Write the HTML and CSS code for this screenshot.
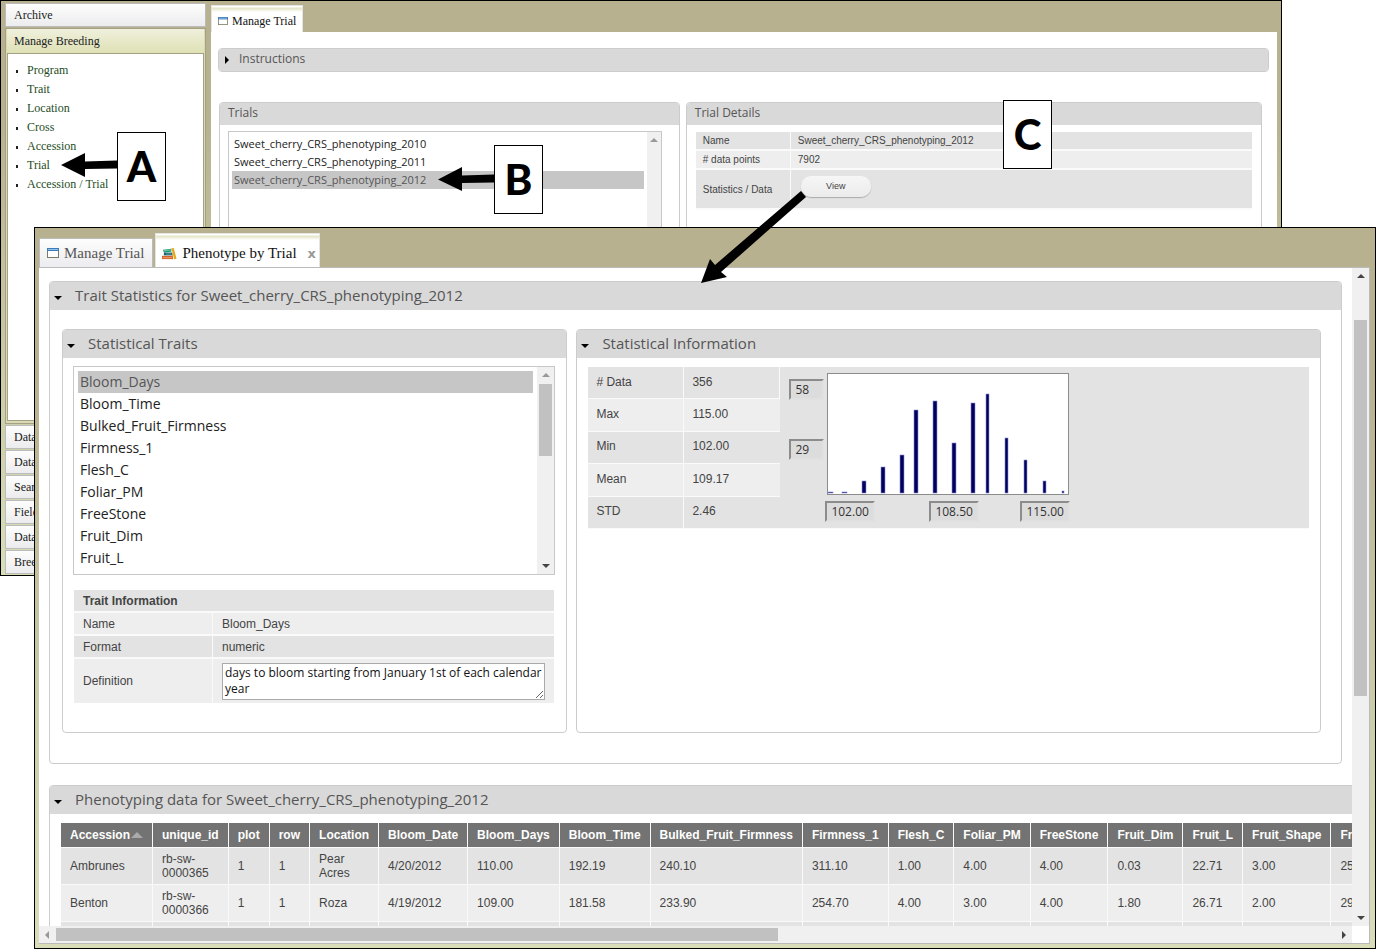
FILE: index.html
```html
<!DOCTYPE html>
<html lang="en">
<head>
  <meta charset="UTF-8">
  <meta name="viewport" content="width=device-width, initial-scale=1.0">
  <title>Phenotype by Trial</title>
  <link rel="stylesheet" href="styles.css">
</head>
<body>
  <!-- Manage Trial window -->
  <div class="window window-back">
    <nav class="sidebar">
      <button class="section" type="button">Archive</button>
      <div class="section-open">
        <button class="section-title" type="button">Manage Breeding</button>
        <ul class="menu">
          <li><a href="#program">Program</a></li>
          <li><a href="#trait">Trait</a></li>
          <li><a href="#location">Location</a></li>
          <li><a href="#cross">Cross</a></li>
          <li><a href="#accession">Accession</a></li>
          <li><a href="#trial">Trial</a></li>
          <li><a href="#accession-trial">Accession / Trial</a></li>
        </ul>
      </div>
      <button class="section" type="button">Data</button>
      <button class="section" type="button">Data</button>
      <button class="section" type="button">Search</button>
      <button class="section" type="button">Field</button>
      <button class="section" type="button">Data</button>
      <button class="section" type="button">Breeding</button>
    </nav>

    <main class="work">
      <div class="tabs tabs-small">
        <button class="tab active" type="button">
          <svg class="icon-window" viewBox="0 0 12 10">
            <rect x="0.5" y="0.5" width="11" height="9" fill="#fff" stroke="#7b7c60"></rect>
            <rect x="0" y="0" width="12" height="3" fill="#3d7cb8"></rect>
            <rect x="1" y="1" width="10" height="1" fill="#8fc1ea"></rect>
          </svg>
          Manage Trial
        </button>
      </div>
      <div class="work-body">
        <section class="panel panel-small">
          <h2 class="panel-head"><span class="caret right"></span>Instructions</h2>
        </section>
        <div class="trial-columns">
          <section class="panel panel-small trials">
            <h2 class="panel-head"><label for="trials">Trials</label></h2>
            <div class="listbox">
              <select id="trials" size="6">
                <option>Sweet_cherry_CRS_phenotyping_2010</option>
                <option>Sweet_cherry_CRS_phenotyping_2011</option>
                <option selected>Sweet_cherry_CRS_phenotyping_2012</option>
              </select>
              <div class="scroll-y"><span class="arrow up off"></span></div>
            </div>
          </section>
          <section class="panel panel-small details">
            <h2 class="panel-head">Trial Details</h2>
            <table class="info info-small">
              <tr><th>Name</th><td>Sweet_cherry_CRS_phenotyping_2012</td></tr>
              <tr><th># data points</th><td>7902</td></tr>
              <tr class="tall"><th>Statistics / Data</th><td><button class="view" type="button">View</button></td></tr>
            </table>
          </section>
        </div>
      </div>
    </main>
  </div>

  <!-- Phenotype by Trial window -->
  <div class="window window-front">
    <div class="tabs">
      <button class="tab" type="button">
        <svg class="icon-window" viewBox="0 0 12 10">
          <rect x="0.5" y="0.5" width="11" height="9" fill="#fff" stroke="#7b7c60"></rect>
          <rect x="0" y="0" width="12" height="3" fill="#3d7cb8"></rect>
          <rect x="1" y="1" width="10" height="1" fill="#8fc1ea"></rect>
        </svg>
        Manage Trial
      </button>
      <button class="tab active" type="button">
        <svg class="icon-books" viewBox="0 0 16 13">
          <path d="M1 2.5 10 1.5 10 4.5 2 5.5Z" fill="#1f9a78"></path>
          <path d="M2 3.5 10 2.7" stroke="#9fd9b5" stroke-width="0.7"></path>
          <path d="M2 5.5H11V8.5H2Z" fill="#17606e"></path>
          <path d="M4 7H10" stroke="#7fc0c0" stroke-width="0.7"></path>
          <path d="M0 9H11V12.5H0Z" fill="#d9622b"></path>
          <path d="M1 11H11" stroke="#f2b48b" stroke-width="0.8"></path>
          <path d="M10 1 12.5 0.5 15.5 12 13 12.5Z" fill="#e9a71c"></path>
          <path d="M11 6 12 12.5H10.5Z" fill="#c07a12"></path>
        </svg>
        Phenotype by Trial
        <span class="close">x</span>
      </button>
    </div>

    <div class="frame">
      <div class="view-port">
        <section class="panel">
          <h2 class="panel-head"><span class="caret down"></span>Trait Statistics for Sweet_cherry_CRS_phenotyping_2012</h2>
          <div class="stats">
            <section class="panel traits">
              <h2 class="panel-head"><span class="caret down"></span><label for="traits">Statistical Traits</label></h2>
              <div class="listbox">
                <select id="traits" size="9">
                  <option selected>Bloom_Days</option>
                  <option>Bloom_Time</option>
                  <option>Bulked_Fruit_Firmness</option>
                  <option>Firmness_1</option>
                  <option>Flesh_C</option>
                  <option>Foliar_PM</option>
                  <option>FreeStone</option>
                  <option>Fruit_Dim</option>
                  <option>Fruit_L</option>
                </select>
                <div class="scroll-y">
                  <span class="arrow up off"></span>
                  <span class="thumb"></span>
                  <span class="arrow down"></span>
                </div>
              </div>
              <table class="info trait-info">
                <tr><th class="title" colspan="2">Trait Information</th></tr>
                <tr><th>Name</th><td>Bloom_Days</td></tr>
                <tr><th>Format</th><td>numeric</td></tr>
                <tr>
                  <th><label for="definition">Definition</label></th>
                  <td><textarea id="definition" rows="2">days to bloom starting from January 1st of each calendar year</textarea></td>
                </tr>
              </table>
            </section>

            <section class="panel numbers">
              <h2 class="panel-head"><span class="caret down"></span>Statistical Information</h2>
              <table class="info stat-info">
                <tr>
                  <th># Data</th><td>356</td>
                  <td class="chart-cell" rowspan="5">
                    <div class="chart">
                      <div class="y-labels">
                        <input type="text" value="58" aria-label="Highest count" readonly>
                        <input type="text" value="29" aria-label="Middle count" readonly>
                      </div>
                      <svg class="plot" viewBox="0 0 242 122">
                        <rect x="0.5" y="0.5" width="241" height="121" fill="#fff" stroke="#8c8c8c"></rect>
                        <g fill="#00005f" stroke="#8c8cd0" stroke-width="0.6">
                          <rect x="1" y="119" width="5" height="1"></rect>
                          <rect x="15" y="119" width="5" height="1"></rect>
                          <rect x="35" y="108" width="4" height="12"></rect>
                          <rect x="54" y="94" width="4" height="26"></rect>
                          <rect x="73" y="82" width="4" height="38"></rect>
                          <rect x="87" y="37" width="4" height="83"></rect>
                          <rect x="106" y="28" width="4" height="92"></rect>
                          <rect x="125" y="70" width="4" height="50"></rect>
                          <rect x="144" y="30" width="4" height="90"></rect>
                          <rect x="159" y="21" width="3" height="99"></rect>
                          <rect x="178" y="65" width="3" height="55"></rect>
                          <rect x="197" y="87" width="3" height="33"></rect>
                          <rect x="216" y="108" width="3" height="12"></rect>
                          <rect x="235" y="118" width="2" height="2"></rect>
                        </g>
                      </svg>
                      <div class="x-labels">
                        <input type="text" value="102.00" aria-label="Lowest value" readonly>
                        <input type="text" value="108.50" aria-label="Middle value" readonly>
                        <input type="text" value="115.00" aria-label="Highest value" readonly>
                      </div>
                    </div>
                  </td>
                </tr>
                <tr><th>Max</th><td>115.00</td></tr>
                <tr><th>Min</th><td>102.00</td></tr>
                <tr><th>Mean</th><td>109.17</td></tr>
                <tr><th>STD</th><td>2.46</td></tr>
              </table>
            </section>
          </div>
        </section>

        <section class="panel panel-wide">
          <h2 class="panel-head"><span class="caret down"></span>Phenotyping data for Sweet_cherry_CRS_phenotyping_2012</h2>
          <table class="data">
            <thead>
              <tr>
                <th>Accession<span class="sort"></span></th><th>unique_id</th><th>plot</th><th>row</th><th>Location</th><th>Bloom_Date</th><th>Bloom_Days</th><th>Bloom_Time</th><th>Bulked_Fruit_Firmness</th><th>Firmness_1</th><th>Flesh_C</th><th>Foliar_PM</th><th>FreeStone</th><th>Fruit_Dim</th><th>Fruit_L</th><th>Fruit_Shape</th><th>Fruit_W</th>
              </tr>
            </thead>
            <tbody>
              <tr>
                <td>Ambrunes</td><td>rb-sw-0000365</td><td>1</td><td>1</td><td>Pear Acres</td><td>4/20/2012</td><td>110.00</td><td>192.19</td><td>240.10</td><td>311.10</td><td>1.00</td><td>4.00</td><td>4.00</td><td>0.03</td><td>22.71</td><td>3.00</td><td>25.00</td>
              </tr>
              <tr>
                <td>Benton</td><td>rb-sw-0000366</td><td>1</td><td>1</td><td>Roza</td><td>4/19/2012</td><td>109.00</td><td>181.58</td><td>233.90</td><td>254.70</td><td>4.00</td><td>3.00</td><td>4.00</td><td>1.80</td><td>26.71</td><td>2.00</td><td>29.00</td>
              </tr>
              <tr class="next">
                <td></td><td></td><td></td><td></td><td></td><td></td><td></td><td></td><td></td><td></td><td></td><td></td><td></td><td></td><td></td><td></td><td></td>
              </tr>
            </tbody>
          </table>
        </section>
      </div>
      <div class="scroll-y">
        <span class="arrow up"></span>
        <span class="thumb"></span>
        <span class="arrow down"></span>
      </div>
      <div class="scroll-x">
        <span class="arrow left off"></span>
        <span class="thumb"></span>
        <span class="arrow right"></span>
      </div>
    </div>
  </div>

  <!-- Step markers -->
  <svg class="pointer pointer-a" viewBox="0 0 56 24">
    <path d="M0 12 24 0V8.5L56 7.5V15.5L24 16V24Z"></path>
  </svg>
  <div class="marker marker-a">A</div>
  <svg class="pointer pointer-b" viewBox="0 0 56 24">
    <path d="M0 12.5 24 0V8.5L56 7.5V15.5L24 16V24Z"></path>
  </svg>
  <div class="marker marker-b">B</div>
  <svg class="pointer pointer-c" viewBox="0 0 106 94">
    <path d="M0 93 9 69 14 75 100 1 105 7 20 82 26 87Z"></path>
  </svg>
  <div class="marker marker-c">C</div>
</body>
</html>
```
FILE: styles.css
```css
* {
  box-sizing: border-box;
}

body {
  margin: 0;
  position: relative;
  min-height: 100vh;
  overflow: hidden;
  background-color: #fff;
  color: #444;
  font-family: "Liberation Sans", Arial, sans-serif;
  font-size: 12px;
}

button, input, select, textarea {
  font: inherit;
  color: inherit;
}

.window {
  position: absolute;
  border: 1px solid #000;
  background: linear-gradient(#b7b18f 20%, #d9deb9);
}

.window-back {
  top: 0;
  left: 0;
  right: 94px;
  height: 576px;
  padding: 2px 4px 1px;
  display: flex;
  gap: 5px;
}

.window-front {
  top: 227px;
  left: 34px;
  right: 0;
  bottom: 0;
  padding: 5px 5px 4px 4px;
  display: flex;
  flex-direction: column;
}

/* Sidebar */
.sidebar {
  width: 201px;
  display: flex;
  flex-direction: column;
  gap: 1px;
  font-family: "Liberation Serif", Georgia, serif;
  font-size: 12px;
  line-height: 16px;
}

.section, .section-title {
  height: 24px;
  padding: 0 8px;
  border: 1px solid #bbb;
  background: linear-gradient(#fdfdfd, #ececee);
  color: #222;
  text-align: left;
}

.section-open {
  flex: 1;
  display: flex;
  flex-direction: column;
  padding: 0 1px 2px;
  border: 1px solid #a5a184;
  background-color: #d9dab4;
}

.section-title {
  padding: 0 7px;
  border: 0;
  background: linear-gradient(#eff0dc, #dfe1b5);
}

.menu {
  flex: 1;
  margin: 0;
  padding: 7px 0 0 19px;
  border: 1px solid #a5a184;
  background-color: #fff;
  list-style: none;
}

.menu li {
  height: 19px;
  line-height: 19px;
}

.menu li::before {
  content: "";
  float: left;
  width: 2px;
  height: 3px;
  margin: 9px 0 0 -11px;
  background-color: #222;
}

.menu a {
  color: #1d4d1d;
  text-decoration: none;
}

/* Tabs */
.tabs {
  height: 34px;
  display: flex;
  align-items: flex-end;
  gap: 2px;
}

.tab {
  height: 29px;
  padding: 0 8px 0 7px;
  display: flex;
  align-items: center;
  gap: 5px;
  border: 1px solid #bbb;
  border-bottom: 0;
  background: linear-gradient(#fdfdfd, #ececf0);
  color: #555;
  font-family: "Liberation Serif", Georgia, serif;
  font-size: 15px;
}

.tab.active {
  height: 34px;
  padding: 5px 3px 0 6px;
  border-color: #e4e4e4;
  background: linear-gradient(#fff 1px, #e2e4c4 2px, #fff 6px);
  color: #111;
}

.tabs-small {
  height: 29px;
}

.tabs-small .tab.active {
  height: 27px;
  padding: 4px 6px 0 6px;
  gap: 4px;
  font-size: 12px;
}

.icon-window {
  width: 12px;
  height: 10px;
}

.tabs-small .icon-window {
  width: 10px;
  height: 8px;
}

.icon-books {
  width: 15px;
  height: 13px;
}

.close {
  padding-left: 6px;
  color: #999;
  font-family: "DejaVu Sans", sans-serif;
  font-size: 13px;
  font-weight: bold;
}

/* Panels */
.panel {
  border: 1px solid #ccc;
  border-radius: 4px;
  background-color: #fff;
}

.panel-head {
  height: 28px;
  margin: 0;
  padding: 0 8px 2px 25px;
  position: relative;
  border-radius: 3px 3px 0 0;
  background-color: #d9d9d9;
  color: #555;
  font-family: "Open Sans", sans-serif;
  font-size: 15px;
  font-weight: normal;
  line-height: 26px;
  white-space: nowrap;
}

.caret {
  position: absolute;
  left: 4px;
  top: 14px;
  border: 4px solid transparent;
}

.caret.down {
  border-top-color: #000;
}

.caret.right {
  border-left-color: #000;
}

.panel-small .panel-head {
  height: 22px;
  padding: 0 8px;
  font-size: 12px;
  line-height: 20px;
}

.panel-small .caret {
  top: 7px;
  left: 6px;
}

.work {
  flex: 1;
  display: flex;
  flex-direction: column;
}

.work-body {
  flex: 1;
  padding: 16px 8px 0 7px;
  background-color: #fff;
}

.work-body > .panel .panel-head {
  padding-left: 20px;
  border-radius: 3px;
}

.trial-columns {
  margin: 30px 7px 0 1px;
  display: flex;
  gap: 6px;
}

.trials {
  flex: 461;
  height: 300px;
}

.details {
  flex: 577;
}

/* List boxes */
.listbox {
  display: flex;
  margin: 8px 11px 0 10px;
  height: 209px;
  border: 1px solid #c8c8c8;
  background-color: #fff;
}

.listbox select {
  flex: 1;
  min-width: 0;
  padding: 4px;
  border: 0;
  outline: 0;
  overflow: hidden;
  scrollbar-width: none;
  background-color: #fff;
  color: #222;
  font-family: "Open Sans", sans-serif;
  font-size: 14px;
}

.listbox option {
  height: 22px;
  min-height: 22px;
  padding: 1px 2px 0;
}

.listbox option:checked {
  background: linear-gradient(#c6c6c6, #c6c6c6);
  -webkit-text-fill-color: #555;
}

.trials .listbox {
  margin: 6px 17px 0 8px;
  height: 250px;
}

.trials select {
  padding: 3px;
  font-size: 11px;
}

.trials option {
  height: 18px;
  min-height: 18px;
}

/* Scroll bars */
.scroll-y {
  width: 17px;
  padding: 6px 2px;
  display: flex;
  flex-direction: column;
  align-items: center;
  background-color: #f0f0f0;
}

.scroll-x {
  height: 17px;
  padding: 2px 6px;
  display: flex;
  align-items: center;
  background-color: #f0f0f0;
}

.trials .scroll-y {
  width: 14px;
}

.arrow {
  border: 4px solid transparent;
}

.arrow.up {
  border-top: 0;
  border-bottom-color: #444;
}

.arrow.down {
  margin-top: auto;
  border-bottom: 0;
  border-top-color: #444;
}

.arrow.left {
  border-left: 0;
  border-right-color: #444;
}

.arrow.right {
  margin-left: auto;
  border-right: 0;
  border-left-color: #444;
}

.arrow.up.off {
  border-bottom-color: #999;
}

.arrow.left.off {
  border-right-color: #999;
}

.thumb {
  background-color: #c1c1c1;
}

.traits .thumb {
  width: 13px;
  height: 72px;
  margin-top: 7px;
}

/* Info tables */
.info {
  border-spacing: 0;
}

.info th, .info td {
  height: 23px;
  padding: 0 9px;
  border-right: 1px solid #fafafa;
  border-bottom: 2px solid #fafafa;
  background-color: #e3e3e3;
  font-weight: normal;
  text-align: left;
}

.info tr:nth-child(even) > * {
  background-color: #eee;
}

.info td:last-child {
  border-right: 0;
}

.info .title {
  border-right: 0;
  font-weight: bold;
}

.info-small {
  width: calc(100% - 18px);
  margin: 7px 9px 0;
  font-size: 10px;
}

.info-small th, .info-small td {
  height: 19px;
  padding: 0 7px;
}

.info-small th {
  width: 95px;
}

.info-small .tall > * {
  height: 40px;
}

.view {
  display: block;
  width: 70px;
  height: 21px;
  margin: 0 0 6px 3px;
  padding: 0;
  border: 0;
  border-radius: 10px;
  background: linear-gradient(#f6f6f6, #ebebeb);
  box-shadow: 0 1px 1px #aaa;
  font-size: 9px;
}

.trait-info {
  width: calc(100% - 23px);
  margin: 15px 12px 0 11px;
}

.trait-info th {
  width: 139px;
}

.trait-info tr:last-child > * {
  height: 44px;
  border-bottom: 0;
}

.trait-info textarea {
  display: block;
  width: 100%;
  height: 37px;
  padding: 1px 2px;
  border: 1px solid #aaa;
  overflow: hidden;
  background-color: #fff;
  color: #111;
  font-family: "Open Sans", sans-serif;
  font-size: 12px;
  line-height: 16px;
}

.stats {
  display: flex;
  gap: 9px;
  padding: 19px 20px 30px 12px;
}

.traits {
  flex: 505;
  min-width: 0;
  padding-bottom: 29px;
}

.numbers {
  flex: 745;
  min-width: 0;
}

.stat-info {
  width: calc(100% - 22px);
  height: 162px;
  margin: 9px 11px 0;
}

.stat-info th, .stat-info td {
  width: 96px;
  height: 32px;
  padding: 0 8px 2px;
  border-bottom-width: 1px;
}

.stat-info .chart-cell {
  width: auto;
  padding: 6px 9px 0;
  vertical-align: top;
}

/* Chart */
.chart {
  display: grid;
  grid-template-columns: 35px 245px;
  gap: 6px 1px;
}

.chart input {
  width: 50px;
  height: 21px;
  padding: 0 2px 0 4px;
  border: 2px inset #e0e0e0;
  background-color: #dcdcdc;
  color: #333;
  font-family: "Open Sans", sans-serif;
  font-size: 12px;
}

.y-labels {
  display: flex;
  flex-direction: column;
  gap: 39px;
  padding-top: 6px;
}

.chart .y-labels input {
  width: 35px;
}

.plot {
  width: 242px;
  height: 122px;
  margin-left: 2px;
}

.x-labels {
  grid-column: 2;
  display: grid;
  grid-template-columns: 104px 91px 50px;
}

/* Scrolled frame */
.frame {
  flex: 1;
  min-height: 0;
  display: grid;
  grid-template-columns: 1fr 17px;
  grid-template-rows: 1fr 17px;
  border: 1px solid #bbb;
  border-width: 1px 1px 1px 0;
  background-color: #fff;
}

.view-port {
  min-width: 0;
  min-height: 0;
  padding: 13px 10px 0;
  overflow: hidden;
}

.frame > .scroll-y .thumb {
  width: 13px;
  height: 376px;
  margin-top: 42px;
}

.frame > .scroll-x .thumb {
  width: 722px;
  height: 13px;
  margin-left: 7px;
}

.panel-wide {
  width: max-content;
  margin-top: 21px;
}

/* Data table */
.data {
  width: min-content;
  margin: 9px 11px 0;
  border-spacing: 0;
  line-height: 14px;
}

.data th, .data td {
  padding: 4px 9px;
  border-right: 1px solid #fafafa;
  border-bottom: 1px solid #fafafa;
  background-color: #e3e3e3;
  text-align: left;
}

.data th {
  padding: 5px 9px;
  background-color: #737373;
  color: #fff;
  white-space: nowrap;
}

.data tr:nth-child(even) td {
  background-color: #eee;
}

.data .next td {
  height: 37px;
}

.sort {
  display: inline-block;
  margin-left: 1px;
  border: 6px solid transparent;
  border-top: 0;
  border-bottom-color: #aaa;
  vertical-align: 1px;
}

/* Step markers */
.marker {
  position: absolute;
  width: 49px;
  height: 69px;
  border: 1px solid #000;
  background-color: #fff;
  color: #000;
  font-family: Lato, sans-serif;
  font-size: 42px;
  font-weight: 900;
  line-height: 67px;
  text-align: center;
}

.marker-a {
  left: 117px;
  top: 132px;
}

.marker-b {
  left: 494px;
  top: 145px;
}

.marker-c {
  left: 1003px;
  top: 100px;
}

.pointer {
  position: absolute;
  pointer-events: none;
}

.pointer-a {
  left: 61px;
  top: 153px;
  width: 56px;
  height: 24px;
}

.pointer-b {
  left: 438px;
  top: 167px;
  width: 56px;
  height: 24px;
}

.pointer-c {
  left: 701px;
  top: 190px;
  width: 106px;
  height: 94px;
}
```
